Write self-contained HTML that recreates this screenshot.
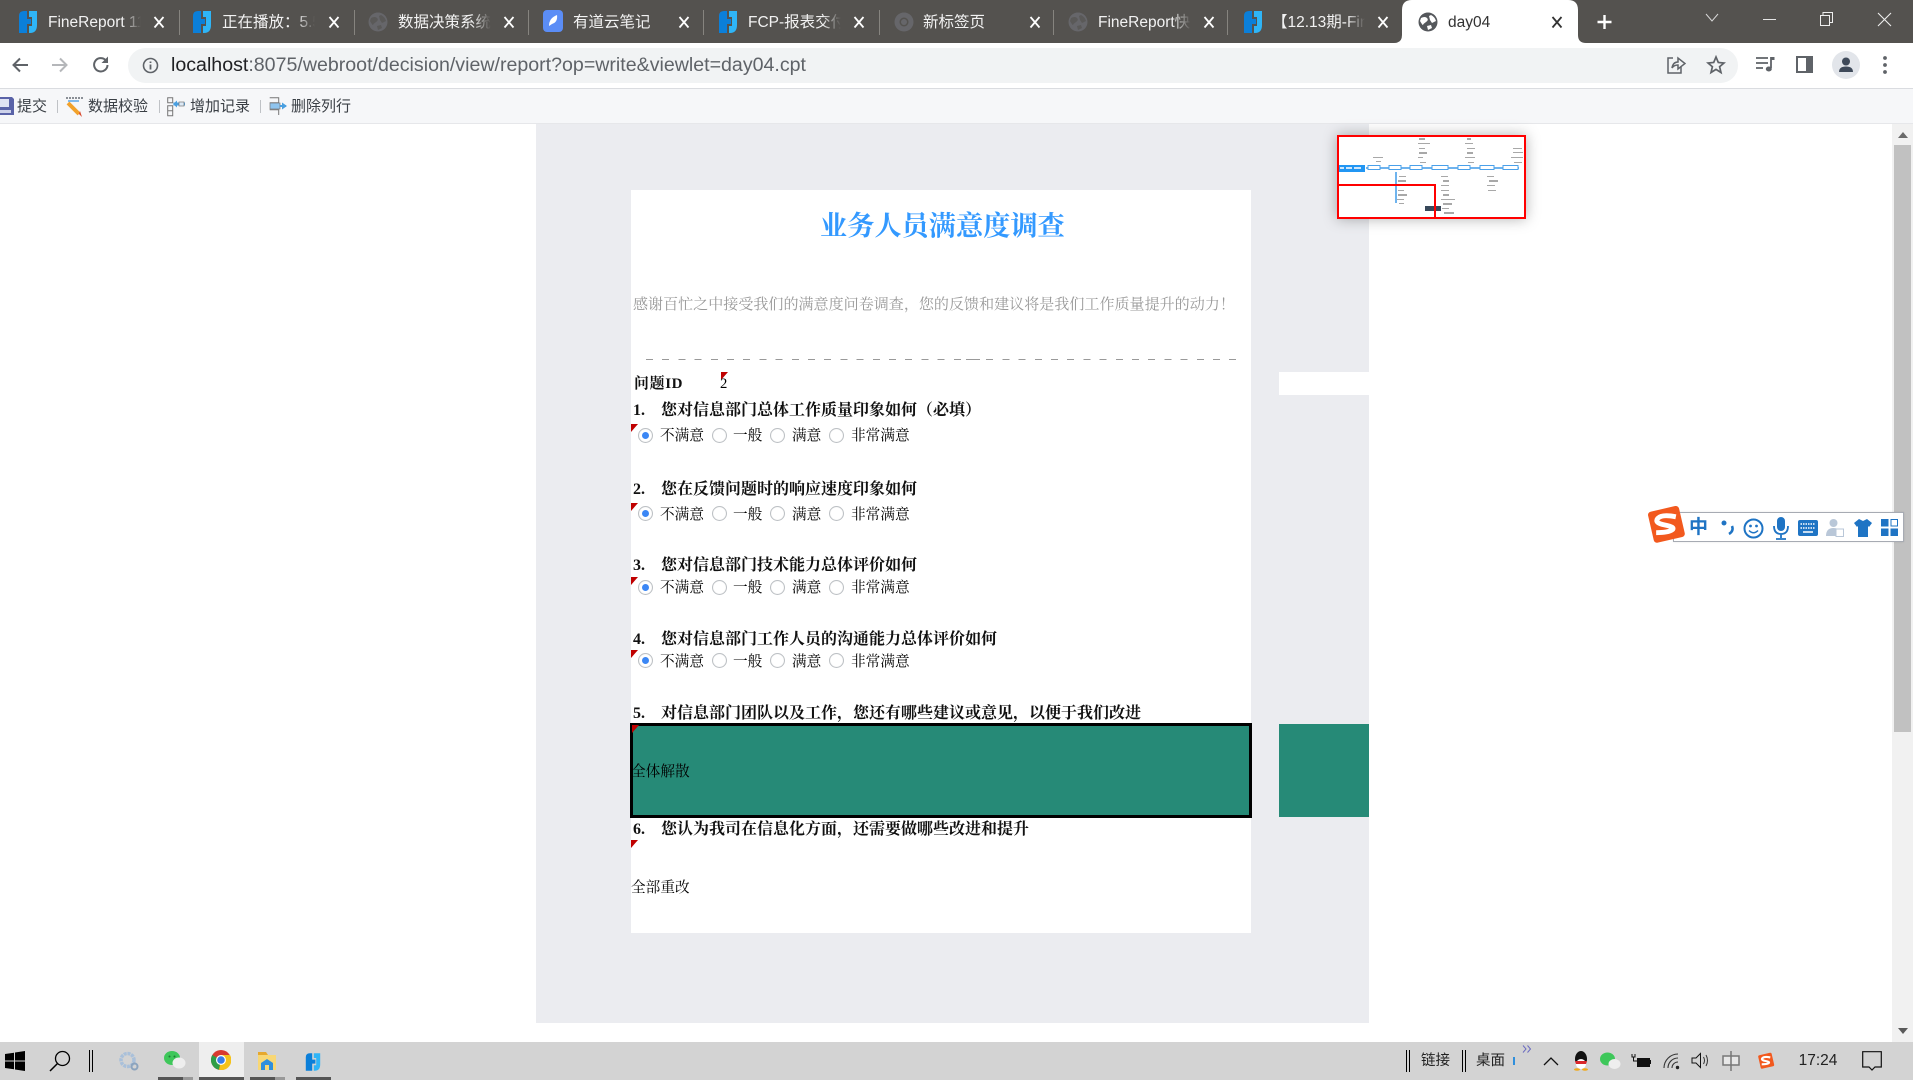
<!DOCTYPE html>
<html><head><meta charset="utf-8">
<style>
*{box-sizing:border-box}
html,body{margin:0;padding:0;width:1913px;height:1080px;overflow:hidden;background:#fff}
body{position:relative;font-family:"Liberation Sans","Noto Sans CJK SC",sans-serif}
.a{position:absolute}
.tab{position:absolute;top:13px;height:20px;line-height:20px;font-size:15.5px;color:#f2f2f2;white-space:nowrap;overflow:hidden;width:93px;
 -webkit-mask-image:linear-gradient(90deg,#000 80%,transparent)}
.x{position:absolute;top:12px;width:20px;height:20px;margin-left:-10px}
.sep{position:absolute;top:10px;width:1px;height:25px;background:#86847f}
.s{position:absolute;font-family:"Liberation Serif","Noto Serif CJK SC",serif;white-space:nowrap;line-height:20px;height:20px;color:#000}
.q{font-size:16px;font-weight:700;color:#111}
.o{font-size:14.67px}
.r{position:absolute;width:15px;height:15px;border-radius:50%;background:#fff;border:1.5px solid #bcc0c4;box-shadow:inset 0 0 1px #ddd}
.r.c::after{content:"";position:absolute;left:2.5px;top:2.5px;width:7px;height:7px;border-radius:50%;background:#3b87f5}
.c0{position:absolute;width:0;height:0;border-top:8px solid #c00000;border-right:7px solid transparent}
.fr{position:absolute;font-size:15px;line-height:20px;height:20px;top:97px;color:#3a3f45;white-space:nowrap}
.vs{position:absolute;top:100px;width:1px;height:13px;background:#bfc2c6}
.tb{position:absolute;top:1042px;height:38px}
.ul{position:absolute;top:1077px;height:3px;background:#555}
</style></head>
<body>
<svg width="0" height="0" style="position:absolute">
 <defs>
  <symbol id="fr" viewBox="0 0 20 24"><path fill="#0b7fd9" d="M1 6Q1 1 6 1H9V9H13V14H9V23H1Z"/><path fill="#2fb5f7" d="M11 1H19V15Q19 23 12 23H11V16H14V7H11Z"/></symbol>
  <symbol id="gl" viewBox="0 0 20 20"><circle cx="10" cy="10" r="9.5" fill="currentColor"/><path fill="var(--h)" d="M3 6Q7 4 9 6T8 10 5 13 2 9ZM13 3Q17 5 18 9L14 11 12 8 11 4ZM9 14L13 13 14 16 10 18Z"/></symbol>
  <symbol id="xx" viewBox="0 0 20 20"><path d="M5.500 5L14.500 15.500M14.500 5L5.500 15.500" stroke="currentColor" stroke-width="1.800" fill="none"/></symbol>
 </defs>
</svg>

<!-- tab strip -->
<div class="a" style="left:0;top:0;width:1913px;height:43px;background:#54524f"></div>
<div class="sep" style="left:179px"></div><div class="sep" style="left:354px"></div><div class="sep" style="left:528px"></div><div class="sep" style="left:703px"></div><div class="sep" style="left:879px"></div><div class="sep" style="left:1053px"></div><div class="sep" style="left:1227px"></div>

<svg class="a" style="left:18px;top:10px" width="20" height="24"><use href="#fr"/></svg>
<div class="tab" style="left:48px">FineReport 11.0</div><svg class="x" style="left:159px;color:#fff"><use href="#xx"/></svg>
<svg class="a" style="left:192px;top:10px" width="20" height="24"><use href="#fr"/></svg>
<div class="tab" style="left:222px">正在播放：5.5 报表</div><svg class="x" style="left:334px;color:#fff"><use href="#xx"/></svg>
<svg class="a" style="left:368px;top:12px;color:#66666a;--h:#5a5958" width="20" height="20"><use href="#gl"/></svg>
<div class="tab" style="left:398px">数据决策系统</div><svg class="x" style="left:509px;color:#fff"><use href="#xx"/></svg>
<svg class="a" style="left:543px;top:10px" width="20" height="22" viewBox="0 0 20 22"><rect width="20" height="22" rx="4" fill="#5b8df6"/><path d="M6 16Q6 8 14 5Q15 12 9 14Z" fill="#fff"/></svg>
<div class="tab" style="left:573px">有道云笔记</div><svg class="x" style="left:684px;color:#fff"><use href="#xx"/></svg>
<svg class="a" style="left:718px;top:10px" width="20" height="24"><use href="#fr"/></svg>
<div class="tab" style="left:748px">FCP-报表交付工程师</div><svg class="x" style="left:859px;color:#fff"><use href="#xx"/></svg>
<svg class="a" style="left:894px;top:12px" width="20" height="20" viewBox="0 0 20 20"><circle cx="10" cy="10" r="9.5" fill="#66666a"/><circle cx="10" cy="10" r="4.5" fill="#54524f"/><circle cx="10" cy="10" r="3" fill="#66666a"/></svg>
<div class="tab" style="left:923px">新标签页</div><svg class="x" style="left:1035px;color:#fff"><use href="#xx"/></svg>
<svg class="a" style="left:1068px;top:12px;color:#66666a;--h:#5a5958" width="20" height="20"><use href="#gl"/></svg>
<div class="tab" style="left:1098px">FineReport快速入门</div><svg class="x" style="left:1209px;color:#fff"><use href="#xx"/></svg>
<svg class="a" style="left:1243px;top:10px" width="20" height="24"><use href="#fr"/></svg>
<div class="tab" style="left:1272px">【12.13期-FineReport</div><svg class="x" style="left:1383px;color:#fff"><use href="#xx"/></svg>

<!-- active tab -->
<svg class="a" style="left:1394px;top:0" width="192" height="43" viewBox="0 0 192 43"><path fill="#fff" d="M0 43Q8 43 8 35V10Q8 0 18 0H174Q184 0 184 10V35Q184 43 192 43Z"/></svg>
<svg class="a" style="left:1418px;top:12px;color:#55585c;--h:#fff" width="20" height="20"><use href="#gl"/></svg>
<div class="tab" style="left:1448px;color:#333;width:80px">day04</div><svg class="x" style="left:1557px;color:#333"><use href="#xx"/></svg>

<svg class="a" style="left:1595px;top:12px" width="20" height="20"><path d="M9.500 3V17M2.500 10H16.500" stroke="#fff" stroke-width="2.400"/></svg>
<svg class="a" style="left:1705px;top:13px" width="14" height="10"><path d="M1 1L7 8L13 1" stroke="#d8d8d8" fill="none"/></svg>
<div class="a" style="left:1763px;top:19px;width:13px;height:1px;background:#e6e6e6"></div>
<svg class="a" style="left:1819px;top:11px" width="15" height="16"><path d="M1.500 4.500H10.500V14.500H1.500ZM4 4.500V1.500H13.500V11.500H10.500" stroke="#eee" fill="none"/></svg>
<svg class="a" style="left:1877px;top:12px" width="15" height="15"><path d="M1 1L14 14M14 1L1 14" stroke="#eee" stroke-width="1.100"/></svg>

<!-- address bar -->
<div class="a" style="left:0;top:43px;width:1913px;height:46px;background:#fff;border-bottom:1px solid #dadce0"></div>
<svg class="a" style="left:11px;top:56px" width="18" height="18"><path d="M17 9H3M9 2.500L2.500 9L9 15.500" stroke="#5f6368" stroke-width="2" fill="none"/></svg>
<svg class="a" style="left:51px;top:56px" width="18" height="18"><path d="M1 9H15M9 2.500L15.500 9L9 15.500" stroke="#b5b7ba" stroke-width="2" fill="none"/></svg>
<svg class="a" style="left:92px;top:56px" width="18" height="18"><path d="M15.500 9A6.700 6.700 0 1 1 13.500 4" stroke="#5f6368" stroke-width="2" fill="none"/><path d="M16 0.500V7H9.500Z" fill="#5f6368"/></svg>
<div class="a" style="left:128px;top:48px;width:1610px;height:35px;border-radius:18px;background:#f1f3f4"></div>
<svg class="a" style="left:142px;top:57px" width="17" height="17"><circle cx="8.500" cy="8.500" r="7" stroke="#5f6368" stroke-width="1.600" fill="none"/><path d="M8.500 7.500V12.500M8.500 4.500V6" stroke="#5f6368" stroke-width="1.800"/></svg>
<div class="a" style="left:171px;top:53px;height:24px;line-height:24px;font-size:19.6px;color:#5f6368;white-space:nowrap"><span style="color:#202124">localhost</span>:8075/webroot/decision/view/report?op=write&amp;viewlet=day04.cpt</div>
<svg class="a" style="left:1666px;top:55px" width="20" height="20" viewBox="0 0 20 20"><path d="M7 3H2V18H15V12" stroke="#5f6368" stroke-width="1.500" fill="none"/><path d="M6 13Q7 7 12 7V3L19 8.500L12 14V10Q8 10 6 13Z" stroke="#5f6368" stroke-width="1.500" fill="none"/></svg>
<svg class="a" style="left:1706px;top:55px" width="20" height="20" viewBox="0 0 20 20"><path d="M10 2L12.300 7.500L18 8L13.600 11.700L15 17.500L10 14.400L5 17.500L6.400 11.700L2 8L7.700 7.500Z" stroke="#5f6368" stroke-width="1.700" fill="none"/></svg>
<svg class="a" style="left:1756px;top:56px" width="19" height="17" viewBox="0 0 19 17"><path d="M0 2H12M0 7H12M0 12H7" stroke="#5f6368" stroke-width="1.800"/><path d="M15 1V12" stroke="#5f6368" stroke-width="1.800"/><ellipse cx="12.800" cy="13" rx="3" ry="2.500" fill="#5f6368"/><path d="M15 1H18.500V4H15Z" fill="#5f6368"/></svg>
<svg class="a" style="left:1796px;top:56px" width="17" height="17"><rect x="1" y="1" width="15" height="15" fill="none" stroke="#5f6368" stroke-width="2"/><rect x="10" y="1" width="6" height="15" fill="#5f6368"/></svg>
<svg class="a" style="left:1832px;top:51px" width="28" height="28" viewBox="0 0 28 28"><circle cx="14" cy="14" r="14" fill="#e2e5ea"/><circle cx="14" cy="10.500" r="4" fill="#3f4a5a"/><path d="M7 21Q7 15.500 14 15.500T21 21Z" fill="#3f4a5a"/></svg>
<svg class="a" style="left:1883px;top:56px" width="4" height="18"><circle cx="2" cy="2" r="1.900" fill="#5f6368"/><circle cx="2" cy="9" r="1.900" fill="#5f6368"/><circle cx="2" cy="16" r="1.900" fill="#5f6368"/></svg>

<!-- report toolbar -->
<div class="a" style="left:0;top:89px;width:1913px;height:35px;background:#f6f7f9;border-bottom:1px solid #e6e7ea"></div>
<svg class="a" style="left:0;top:97px" width="14" height="18"><path d="M0 0H12L14 2V18H0Z" fill="#5a63a8"/><rect x="0" y="2" width="9" height="8" fill="#dfe3f3"/><rect x="0" y="13" width="11" height="3" fill="#cdd2ea"/></svg>
<div class="fr" style="left:17px">提交</div>
<div class="vs" style="left:57px"></div>
<svg class="a" style="left:65px;top:96px" width="20" height="21"><path d="M1 2H18" stroke="#8a8f96" stroke-width="2" stroke-dasharray="2 1"/><path d="M3 5H14" stroke="#5aa6e8" stroke-width="1.500"/><path d="M3 7L14 18" stroke="#f2a22c" stroke-width="4"/><path d="M14 18L17 21L15 15Z" fill="#d9472b"/></svg>
<div class="fr" style="left:88px">数据校验</div>
<div class="vs" style="left:159px"></div>
<svg class="a" style="left:167px;top:96px" width="18" height="21"><path d="M.7 1.700H5.700V6.700H.7ZM.7 9.700H5.700V14.700H.7ZM.7 14.700H5.700V19.700H.7Z" stroke="#777" fill="none"/><path d="M6.500 8H18" stroke="#4a9fe0" stroke-width="3"/><path d="M6 8L10 4.500V11.500Z" fill="#4a9fe0"/><rect x="12" y="6" width="5" height="4" fill="#dce9f6" stroke="#777" stroke-width=".7"/></svg>
<div class="fr" style="left:190px">增加记录</div>
<div class="vs" style="left:260px"></div>
<svg class="a" style="left:269px;top:96px" width="18" height="21"><path d="M.7 1.700H9.700V6.700H.7M.7 13.700H9.700V19M.7 6.700" stroke="#777" fill="none"/><rect x="1" y="7" width="10" height="6" fill="#8fc4ee" stroke="#777" stroke-width=".7"/><path d="M11 10H17" stroke="#4a9fe0" stroke-width="2"/><path d="M18 10L13 6.500V13.500Z" fill="#4a9fe0"/></svg>
<div class="fr" style="left:291px">删除列行</div>

<!-- report canvas -->
<div class="a" style="left:536px;top:124px;width:833px;height:899px;background:#ebecf0"></div>
<div class="a" style="left:631px;top:190px;width:620px;height:743px;background:#fff"></div>
<div class="a" style="left:1279px;top:372px;width:90px;height:23px;background:#fff"></div>
<div class="a" style="left:1279px;top:724px;width:90px;height:93px;background:#268a77"></div>

<div class="s" style="left:820px;top:211px;font-size:27.2px;line-height:30px;height:30px;color:#3399ff;font-weight:700">业务人员满意度调查</div>
<div class="s" style="left:633px;top:295px;font-size:15.06px;color:#999">感谢百忙之中接受我们的满意度问卷调查，您的反馈和建议将是我们工作质量提升的动力！</div>
<div class="a" style="left:646px;top:359px;width:597px;height:1px;background:repeating-linear-gradient(90deg,#999 0 7px,transparent 7px 16.2px)"></div>
<div class="a" style="left:966px;top:359px;width:14px;height:1px;background:#999"></div>

<div class="s q" style="left:634px;top:374px;font-size:15px;letter-spacing:.6px">问题ID</div>
<div class="c0" style="left:721px;top:372px"></div>
<div class="s o" style="left:720px;top:374px">2</div>

<div class="s q" style="left:633px;top:401px">1.</div><div class="s q" style="left:661px;top:401px">您对信息部门总体工作质量印象如何（必填）</div>
<div class="c0" style="left:631px;top:424px"></div>
<div class="r c" style="left:638px;top:428px"></div><div class="s o" style="left:660px;top:426px">不满意</div>
<div class="r" style="left:712px;top:428px"></div><div class="s o" style="left:733px;top:426px">一般</div>
<div class="r" style="left:770px;top:428px"></div><div class="s o" style="left:792px;top:426px">满意</div>
<div class="r" style="left:829px;top:428px"></div><div class="s o" style="left:851px;top:426px">非常满意</div>

<div class="s q" style="left:633px;top:480px">2.</div><div class="s q" style="left:661px;top:480px">您在反馈问题时的响应速度印象如何</div>
<div class="c0" style="left:631px;top:503px"></div>
<div class="r c" style="left:638px;top:506px"></div><div class="s o" style="left:660px;top:505px">不满意</div>
<div class="r" style="left:712px;top:506px"></div><div class="s o" style="left:733px;top:505px">一般</div>
<div class="r" style="left:770px;top:506px"></div><div class="s o" style="left:792px;top:505px">满意</div>
<div class="r" style="left:829px;top:506px"></div><div class="s o" style="left:851px;top:505px">非常满意</div>

<div class="s q" style="left:633px;top:556px">3.</div><div class="s q" style="left:661px;top:556px">您对信息部门技术能力总体评价如何</div>
<div class="c0" style="left:631px;top:577px"></div>
<div class="r c" style="left:638px;top:580px"></div><div class="s o" style="left:660px;top:578px">不满意</div>
<div class="r" style="left:712px;top:580px"></div><div class="s o" style="left:733px;top:578px">一般</div>
<div class="r" style="left:770px;top:580px"></div><div class="s o" style="left:792px;top:578px">满意</div>
<div class="r" style="left:829px;top:580px"></div><div class="s o" style="left:851px;top:578px">非常满意</div>

<div class="s q" style="left:633px;top:630px">4.</div><div class="s q" style="left:661px;top:630px">您对信息部门工作人员的沟通能力总体评价如何</div>
<div class="c0" style="left:631px;top:650px"></div>
<div class="r c" style="left:638px;top:653px"></div><div class="s o" style="left:660px;top:652px">不满意</div>
<div class="r" style="left:712px;top:653px"></div><div class="s o" style="left:733px;top:652px">一般</div>
<div class="r" style="left:770px;top:653px"></div><div class="s o" style="left:792px;top:652px">满意</div>
<div class="r" style="left:829px;top:653px"></div><div class="s o" style="left:851px;top:652px">非常满意</div>

<div class="s q" style="left:633px;top:704px">5.</div><div class="s q" style="left:661px;top:704px">对信息部门团队以及工作，您还有哪些建议或意见，以便于我们改进</div>
<div class="a" style="left:630px;top:723px;width:622px;height:95px;background:#268a77;border:3px solid #000"></div>
<div class="c0" style="left:632px;top:725px"></div>
<div class="s o" style="left:631px;top:762px">全体解散</div>

<div class="s q" style="left:633px;top:820px">6.</div><div class="s q" style="left:661px;top:820px">您认为我司在信息化方面，还需要做哪些改进和提升</div>
<div class="c0" style="left:631px;top:840px"></div>
<div class="s o" style="left:631px;top:878px">全部重改</div>

<!-- minimap -->
<svg class="a" style="left:1337px;top:135px;filter:drop-shadow(0 0 7px rgba(0,0,0,.3))" width="189" height="84" viewBox="0 0 189 84">
 <rect width="189" height="84" fill="#fff"/>
 <path d="M29 33H182" stroke="#3f9ae8" stroke-width="1.500"/>
 <path d="M59 37V68" stroke="#3f9ae8" stroke-width="1.500"/>
 <rect x="0" y="30" width="28" height="7" fill="#2196f3"/>
 <g fill="#cfe6fb"><rect x="3" y="32" width="4" height="2"/><rect x="9" y="32" width="6" height="2"/><rect x="17" y="32" width="7" height="2"/></g>
 <g fill="#fff" stroke="#4aa0ea"><rect x="31" y="30.500" width="12" height="4"/><rect x="52" y="30.500" width="12" height="4"/><rect x="73" y="30.500" width="12" height="4"/><rect x="95" y="30.500" width="16" height="4"/><rect x="121" y="30.500" width="12" height="4"/><rect x="143" y="30.500" width="14" height="4"/><rect x="166" y="30.500" width="15" height="4"/></g>
 <g fill="#a8a8a8"><rect x="82" y="3" width="6" height="2"/><rect x="81" y="8" width="12" height="1"/><rect x="82" y="13" width="6" height="1"/><rect x="82" y="17" width="8" height="2"/><rect x="81" y="22" width="5" height="1"/><rect x="83" y="27" width="6" height="1"/>
 <rect x="130" y="3" width="4" height="2"/><rect x="128" y="8" width="8" height="1"/><rect x="130" y="13" width="8" height="1"/><rect x="130" y="17" width="6" height="2"/><rect x="128" y="22" width="10" height="1"/><rect x="131" y="27" width="6" height="1"/>
 <rect x="36" y="22" width="10" height="1"/><rect x="39" y="26" width="5" height="1"/><rect x="176" y="13" width="9" height="1"/><rect x="176" y="17" width="10" height="1"/><rect x="174" y="22" width="12" height="1"/><rect x="177" y="27" width="8" height="1"/>
 <rect x="62" y="41" width="7" height="1"/><rect x="61" y="45" width="8" height="2"/><rect x="61" y="55" width="6" height="1"/><rect x="61" y="59" width="9" height="2"/><rect x="60" y="64" width="7" height="1"/><rect x="62" y="68" width="5" height="1"/>
 <rect x="104" y="41" width="7" height="1"/><rect x="106" y="45" width="6" height="2"/><rect x="104" y="50" width="8" height="1"/><rect x="104" y="55" width="8" height="1"/><rect x="106" y="59" width="6" height="2"/><rect x="104" y="64" width="14" height="1"/><rect x="106" y="68" width="9" height="2"/><rect x="105" y="73" width="7" height="1"/><rect x="107" y="77" width="10" height="2"/>
 <rect x="150" y="41" width="7" height="1"/><rect x="152" y="45" width="9" height="2"/><rect x="150" y="50" width="8" height="1"/><rect x="151" y="55" width="8" height="1"/></g>
 <rect x="88" y="71" width="16" height="5" fill="#38485a"/>
 <rect x="1" y="1" width="187" height="82" fill="none" stroke="#f00" stroke-width="2"/>
 <path d="M0 50H98V84" fill="none" stroke="#f00" stroke-width="2"/>
</svg>

<!-- scrollbar -->
<div class="a" style="left:1892px;top:124px;width:21px;height:918px;background:#f1f1f1"></div>
<div class="a" style="left:1894px;top:145px;width:17px;height:587px;background:#c1c1c1"></div>
<svg class="a" style="left:1897px;top:132px" width="12" height="7"><path d="M6 0L11 6H1Z" fill="#6a6a6a"/></svg>
<svg class="a" style="left:1897px;top:1028px" width="12" height="7"><path d="M6 6L11 0H1Z" fill="#5a5a5a"/></svg>

<!-- sogou bar -->
<div class="a" style="left:1673px;top:512px;width:231px;height:30px;background:#fff;border:1px solid #a7abb3;box-shadow:0 0 2px rgba(0,0,0,.1)"></div>
<svg class="a" style="left:1643px;top:503px" width="46" height="44" viewBox="0 0 42 40"><rect x="7" y="5" width="29" height="29" rx="3" fill="#f2591e" transform="rotate(-13 21 20)"/><path d="M30 12.500Q17 10 13.500 14T20 20 26.500 24.500 12 27" stroke="#fff" stroke-width="4.500" fill="none"/></svg>
<div class="a" style="left:1689px;top:516px;font-size:19px;line-height:24px;font-weight:700;color:#1f74c4">中</div>
<svg class="a" style="left:1720px;top:518px" width="16" height="20"><circle cx="4" cy="5" r="2.500" fill="#1f74c4"/><path d="M12 8Q14 13 9 16" stroke="#1f74c4" stroke-width="2.500" fill="none"/></svg>
<svg class="a" style="left:1743px;top:518px" width="21" height="21"><circle cx="10.500" cy="10.500" r="9" fill="none" stroke="#1f74c4" stroke-width="2"/><circle cx="7.500" cy="8" r="1.400" fill="#1f74c4"/><circle cx="13.500" cy="8" r="1.400" fill="#1f74c4"/><path d="M6 12.500Q10.500 17 15 12.500" fill="none" stroke="#1f74c4" stroke-width="1.500"/></svg>
<svg class="a" style="left:1773px;top:516px" width="16" height="24"><rect x="4" y="1" width="8" height="14" rx="4" fill="#1f74c4"/><path d="M1 10Q1 18 8 18T15 10M8 18V22M3 23H13" fill="none" stroke="#1f74c4" stroke-width="1.800"/></svg>
<svg class="a" style="left:1798px;top:520px" width="20" height="16"><rect width="20" height="16" rx="2" fill="#1f74c4"/><path d="M2.500 4H17.500M2.500 8H17.500" stroke="#fff" stroke-width="1.500" stroke-dasharray="1.500 1"/><path d="M5 12H15" stroke="#fff" stroke-width="1.500"/></svg>
<svg class="a" style="left:1826px;top:518px" width="18" height="20"><circle cx="7.500" cy="5" r="4" fill="#b9c7d8"/><path d="M0 18Q0 10 7.500 10Q10 10 12 11V18Z" fill="#b9c7d8"/><rect x="10" y="11" width="7.500" height="7.500" fill="#fff" stroke="#b9c7d8"/></svg>
<svg class="a" style="left:1854px;top:519px" width="18" height="18"><path d="M5 0L9 2L13 0L18 4L15 8L14 7V18H4V7L3 8L0 4Z" fill="#1f74c4"/></svg>
<svg class="a" style="left:1881px;top:519px" width="17" height="17"><rect width="7.500" height="7.500" fill="#1f74c4"/><rect y="9.500" width="7.500" height="7.500" fill="#1f74c4"/><rect x="9.500" y="9.500" width="7.500" height="7.500" fill="#1f74c4"/><rect x="10" y=".5" width="6.500" height="6.500" fill="#fff" stroke="#1f74c4"/></svg>

<!-- taskbar -->
<div class="a" style="left:0;top:1042px;width:1913px;height:38px;background:#d3d3d3"></div>
<div class="a" style="left:199px;top:1042px;width:45px;height:38px;background:#eeeeee"></div>
<div class="ul" style="left:158px;width:25px"></div><div class="ul" style="left:183px;width:10px;background:#999"></div>
<div class="ul" style="left:199px;width:45px"></div>
<div class="ul" style="left:250px;width:25px"></div><div class="ul" style="left:275px;width:10px;background:#999"></div>
<div class="ul" style="left:296px;width:35px"></div>

<svg class="a" style="left:5px;top:1051px" width="20" height="20"><path d="M0 3L9 1.700V9.500H0ZM10 1.500L20 0V9.500H10ZM0 10.500H9V18.300L0 17ZM10 10.500H20V20L10 18.500Z" fill="#000"/></svg>
<svg class="a" style="left:49px;top:1050px" width="22" height="22"><circle cx="13.500" cy="8.500" r="7" fill="none" stroke="#000" stroke-width="1.300"/><path d="M8.500 13.500L1 21" stroke="#000" stroke-width="1.500"/></svg>
<div class="a" style="left:89px;top:1050px;width:1px;height:22px;background:#000"></div><div class="a" style="left:92px;top:1050px;width:1px;height:22px;background:#000"></div>
<svg class="a" style="left:119px;top:1051px" width="21" height="20"><circle cx="8.500" cy="9" r="6.500" fill="none" stroke="#a9c0da" stroke-width="3.500" stroke-dasharray="3 .8"/><circle cx="15.500" cy="15.500" r="3" fill="none" stroke="#8ba3bd" stroke-width="2"/></svg>
<svg class="a" style="left:164px;top:1050px" width="22" height="20"><ellipse cx="8" cy="8" rx="8" ry="7" fill="#3ec75a"/><ellipse cx="15" cy="13" rx="6.500" ry="5.500" fill="#eee"/><circle cx="5.500" cy="6.500" r="1" fill="#1d7a33"/><circle cx="10.500" cy="6.500" r="1" fill="#1d7a33"/></svg>
<svg class="a" style="left:211px;top:1050px" width="20" height="20" viewBox="0 0 20 20"><circle cx="10" cy="10" r="10" fill="#d93a2f"/><path d="M10 10L1.300 5A10 10 0 0 0 8 19.800Z" fill="#2f9e46"/><path d="M10 5H19A10 10 0 0 1 8 19.800L10 10Z" fill="#f5c21a"/><circle cx="10" cy="10" r="5" fill="#fff"/><circle cx="10" cy="10" r="3.800" fill="#3a7de8"/></svg>
<svg class="a" style="left:258px;top:1052px" width="18" height="18"><path d="M0 0H8L10 3H0Z" fill="#e6a82e"/><rect y="3" width="18" height="15" fill="#f8d775"/><path d="M3 11L9 7L15 11V18H11V13H7V18H3Z" fill="#2f8fdc"/></svg>
<svg class="a" style="left:305px;top:1052px" width="16" height="20"><use href="#fr"/></svg>

<div class="a" style="left:1406px;top:1050px;width:1px;height:22px;background:#000"></div><div class="a" style="left:1409px;top:1050px;width:1px;height:22px;background:#000"></div>
<div class="a" style="left:1421px;top:1051px;font-size:14.500px;line-height:20px;color:#222">链接</div>
<div class="a" style="left:1462px;top:1050px;width:1px;height:22px;background:#000"></div><div class="a" style="left:1465px;top:1050px;width:1px;height:22px;background:#000"></div>
<div class="a" style="left:1476px;top:1051px;font-size:14.500px;line-height:20px;color:#222">桌面</div>
<div class="a" style="left:1513px;top:1057px;width:2px;height:8px;background:#2f8fdc"></div>
<svg class="a" style="left:1522px;top:1045px" width="10" height="8"><path d="M1 .5L4 4L1 7.500M5.500 .5L8.500 4L5.500 7.500" stroke="#6a6ac0" fill="none"/></svg>
<svg class="a" style="left:1543px;top:1056px" width="16" height="10"><path d="M1 9L8 2L15 9" stroke="#111" stroke-width="1.300" fill="none"/></svg>
<svg class="a" style="left:1573px;top:1051px" width="16" height="20"><ellipse cx="8" cy="8" rx="6" ry="8" fill="#111"/><ellipse cx="8" cy="13" rx="5" ry="5" fill="#fff"/><path d="M2 10H14L13 13H3Z" fill="#d9272b"/><ellipse cx="4" cy="18.500" rx="3" ry="1.300" fill="#f0a91c"/><ellipse cx="12" cy="18.500" rx="3" ry="1.300" fill="#f0a91c"/></svg>
<svg class="a" style="left:1600px;top:1052px" width="21" height="18"><ellipse cx="7.500" cy="7" rx="7.500" ry="6.500" fill="#3ec75a"/><ellipse cx="14.500" cy="12" rx="6" ry="5" fill="#eee"/></svg>
<svg class="a" style="left:1631px;top:1053px" width="20" height="16"><rect x="6.500" y="5.500" width="12" height="8" fill="#111" stroke="#111"/><rect x="19" y="7" width="1" height="4" fill="#111"/><path d="M1 1V4H4V1M2.500 4V8H6" stroke="#111" fill="none"/></svg>
<svg class="a" style="left:1663px;top:1052px" width="18" height="18"><g fill="none" stroke="#333" stroke-width="1.100"><path d="M1 16A14 14 0 0 1 15 2"/><path d="M5 16A10 10 0 0 1 15 6"/><path d="M9 16A6 6 0 0 1 15 10"/></g><circle cx="14.500" cy="15.500" r="1.700" fill="#222"/></svg>
<svg class="a" style="left:1691px;top:1052px" width="20" height="17"><path d="M1 6H5L9.500 1.500V15.500L5 11H1Z" stroke="#111" fill="none"/><path d="M12.500 5Q14.500 8.500 12.500 12M15 3Q18 8.500 15 14" stroke="#333" fill="none"/></svg>
<svg class="a" style="left:1722px;top:1050px" width="18" height="22"><path d="M9 1V21M1 6H17V15H1Z" stroke="#777" stroke-width="1.500" fill="#e7e7e7"/></svg>
<svg class="a" style="left:1756px;top:1051px" width="20" height="20" viewBox="0 0 42 40"><rect x="7" y="5" width="29" height="29" rx="3" fill="#f2591e" transform="rotate(-13 21 20)"/><path d="M30 12.500Q17 10 13.500 14T20 20 26.500 24.500 12 27" stroke="#fff" stroke-width="4.500" fill="none"/></svg>
<div class="a" style="left:1798px;top:1051px;width:40px;text-align:center;font-size:15.500px;line-height:20px;color:#222">17:24</div>
<svg class="a" style="left:1862px;top:1051px" width="20" height="20"><path d="M.7 .7H19.300V16H13L10 19L7 16H.7Z" stroke="#111" stroke-width="1.200" fill="none"/></svg>
</body></html>
